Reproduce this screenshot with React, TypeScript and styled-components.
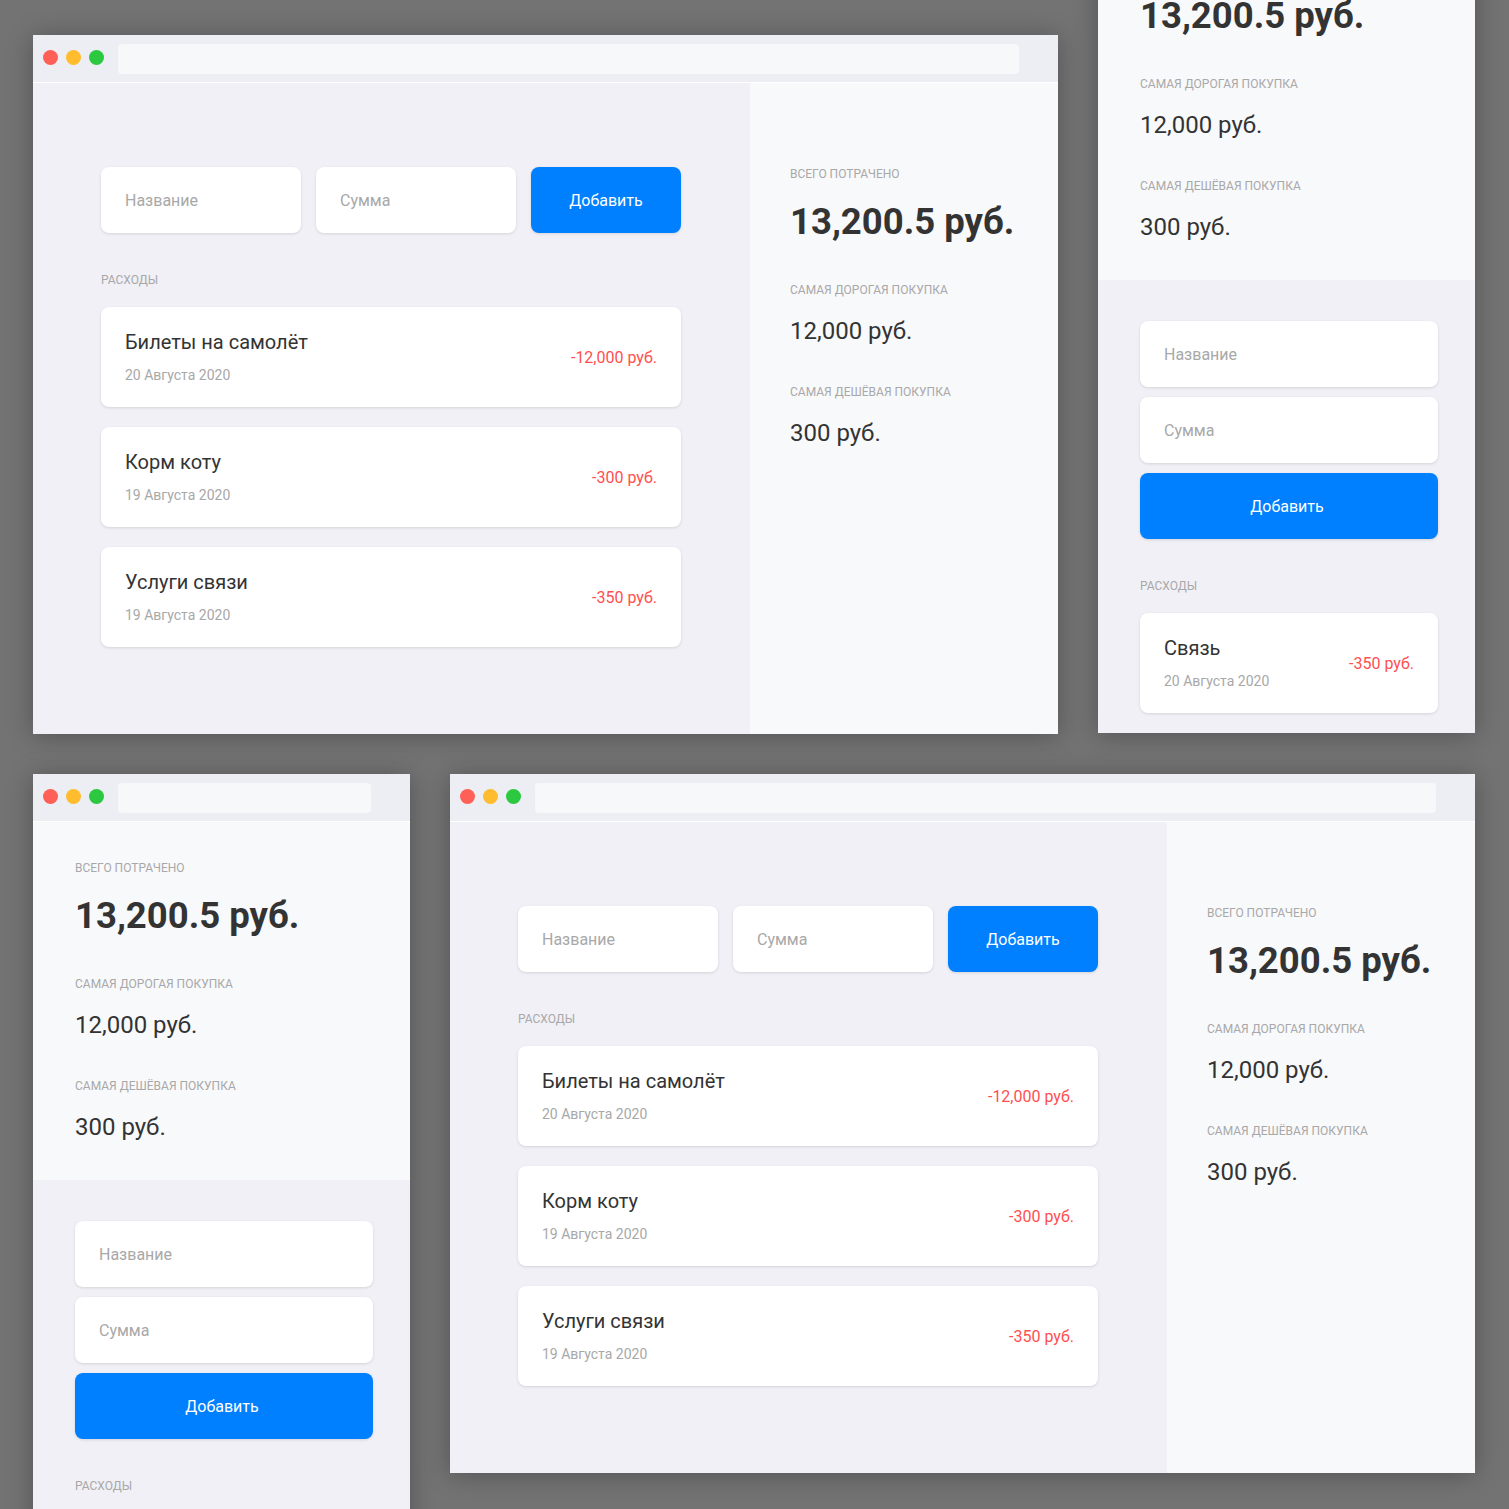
import styled, { createGlobalStyle } from "styled-components";

const GlobalStyle = createGlobalStyle`
  * {
    box-sizing: border-box;
  }
  html,
  body {
    margin: 0;
    padding: 0;
  }
  body {
    font-family: Roboto, "Noto Sans", "Liberation Sans", sans-serif;
    background: #737373;
  }
`;

const Desk = styled.div`
  position: relative;
  width: 1509px;
  height: 1509px;
  overflow: hidden;
  background: #737373;
`;

const Window = styled.div<{ $top: number; $left: number; $width: number; $height: number }>`
  position: absolute;
  top: ${(p) => p.$top}px;
  left: ${(p) => p.$left}px;
  width: ${(p) => p.$width}px;
  height: ${(p) => p.$height}px;
  display: flex;
  flex-direction: column;
  background: #f0f0f6;
  box-shadow: 0 2px 24px rgba(0, 0, 0, 0.28);
  overflow: hidden;
`;

const TitleBar = styled.div`
  display: flex;
  align-items: center;
  flex-shrink: 0;
  height: 48px;
  padding: 9px 39px 8px 10px;
  background: #eceef3;
  border-bottom: 1px solid #ffffff;
`;

const Dots = styled.div`
  display: flex;
  gap: 8px;
  margin: 0 14px 3px 0;
`;

const Dot = styled.span<{ $color: string }>`
  width: 15px;
  height: 15px;
  border-radius: 50%;
  background: ${(p) => p.$color};
`;

const AddressBar = styled.div`
  flex: 1;
  height: 30px;
  border-radius: 4px;
  background: #f7f8fa;
`;

const DesktopBody = styled.div`
  display: flex;
  flex: 1;
`;

const LeftPane = styled.div`
  flex: 1;
  padding: 84px 69px 0 68px;
  background: #f0f0f6;
`;

const RightPane = styled.div`
  width: 308px;
  padding: 84px 40px;
  background: #f8f9fb;
`;

const MobileStats = styled.div`
  padding: 39px 37px 39px 42px;
  background: #f8f9fb;
`;

const MobileMain = styled.div`
  flex: 1;
  padding: 41px 37px 20px 42px;
  background: #f0f0f6;
`;

const Form = styled.div<{ $stacked?: boolean }>`
  display: flex;
  flex-direction: ${(p) => (p.$stacked ? "column" : "row")};
  gap: ${(p) => (p.$stacked ? 10 : 15)}px;
`;

const Field = styled.input<{ $stacked?: boolean }>`
  width: ${(p) => (p.$stacked ? "100%" : "200px")};
  height: 66px;
  padding: 0 24px;
  border: none;
  border-radius: 8px;
  background: #ffffff;
  box-shadow: 0 1px 3px rgba(0, 0, 0, 0.12);
  font-family: Roboto, "Noto Sans", sans-serif;
  font-size: 16px;
  color: #333333;
  outline: none;

  &::placeholder {
    color: #a8a8a8;
  }
`;

const AddButton = styled.button<{ $stacked?: boolean }>`
  width: ${(p) => (p.$stacked ? "100%" : "150px")};
  height: 66px;
  padding: ${(p) => (p.$stacked ? "0 4px 0 0" : "0")};
  border: none;
  border-radius: 8px;
  background: #0080ff;
  box-shadow: 0 1px 3px rgba(0, 0, 0, 0.12);
  color: #ffffff;
  font-family: Roboto, "Noto Sans", sans-serif;
  font-size: 16px;
  cursor: pointer;
`;

const SectionLabel = styled.div`
  margin: 40px 0 20px;
  font-size: 12px;
  line-height: 14px;
  color: #a8a8a8;
  text-transform: uppercase;
`;

const List = styled.div`
  display: flex;
  flex-direction: column;
  gap: 20px;
`;

const Card = styled.div`
  display: flex;
  align-items: center;
  justify-content: space-between;
  height: 100px;
  padding: 0 24px;
  border-radius: 8px;
  background: #ffffff;
  box-shadow: 0 1px 3px rgba(0, 0, 0, 0.12);
`;

const CardTitle = styled.div`
  font-size: 20px;
  line-height: 23px;
  color: #333333;
`;

const CardDate = styled.div`
  margin-top: 13px;
  font-size: 14px;
  line-height: 16px;
  color: #a8a8a8;
`;

const CardAmount = styled.div`
  font-size: 16px;
  color: #ff4f4f;
`;

const Stat = styled.div`
  & + & {
    margin-top: 40px;
  }
`;

const StatLabel = styled.div`
  margin-bottom: 20px;
  font-size: 12px;
  line-height: 14px;
  color: #a8a8a8;
  text-transform: uppercase;
`;

const StatValue = styled.div<{ $big?: boolean }>`
  font-size: ${(p) => (p.$big ? 36.5 : 24)}px;
  line-height: ${(p) => (p.$big ? 42 : 28)}px;
  font-weight: ${(p) => (p.$big ? 700 : 400)};
  color: #333333;
`;

type Expense = { title: string; date: string; amount: string };

const expenses: Expense[] = [
  { title: "Билеты на самолёт", date: "20 Августа 2020", amount: "-12,000 руб." },
  { title: "Корм коту", date: "19 Августа 2020", amount: "-300 руб." },
  { title: "Услуги связи", date: "19 Августа 2020", amount: "-350 руб." },
];

const mobileExpenses: Expense[] = [
  { title: "Связь", date: "20 Августа 2020", amount: "-350 руб." },
];

const Chrome = () => (
  <TitleBar>
    <Dots>
      <Dot $color="#fe5f57" />
      <Dot $color="#febc2e" />
      <Dot $color="#2bc840" />
    </Dots>
    <AddressBar />
  </TitleBar>
);

const Stats = () => (
  <>
    <Stat>
      <StatLabel>Всего потрачено</StatLabel>
      <StatValue $big>13,200.5 руб.</StatValue>
    </Stat>
    <Stat>
      <StatLabel>Самая дорогая покупка</StatLabel>
      <StatValue>12,000 руб.</StatValue>
    </Stat>
    <Stat>
      <StatLabel>Самая дешёвая покупка</StatLabel>
      <StatValue>300 руб.</StatValue>
    </Stat>
  </>
);

const Expenses = ({ items, stacked }: { items: Expense[]; stacked?: boolean }) => (
  <>
    <Form $stacked={stacked}>
      <Field $stacked={stacked} placeholder="Название" />
      <Field $stacked={stacked} placeholder="Сумма" />
      <AddButton $stacked={stacked}>Добавить</AddButton>
    </Form>
    <SectionLabel>Расходы</SectionLabel>
    <List>
      {items.map((item) => (
        <Card key={item.title}>
          <div>
            <CardTitle>{item.title}</CardTitle>
            <CardDate>{item.date}</CardDate>
          </div>
          <CardAmount>{item.amount}</CardAmount>
        </Card>
      ))}
    </List>
  </>
);

const DesktopWindow = ({ top, left }: { top: number; left: number }) => (
  <Window $top={top} $left={left} $width={1025} $height={699}>
    <Chrome />
    <DesktopBody>
      <LeftPane>
        <Expenses items={expenses} />
      </LeftPane>
      <RightPane>
        <Stats />
      </RightPane>
    </DesktopBody>
  </Window>
);

const MobileWindow = ({
  top,
  left,
  height,
  items,
}: {
  top: number;
  left: number;
  height: number;
  items: Expense[];
}) => (
  <Window $top={top} $left={left} $width={377} $height={height}>
    <Chrome />
    <MobileStats>
      <Stats />
    </MobileStats>
    <MobileMain>
      <Expenses items={items} stacked />
    </MobileMain>
  </Window>
);

export default function App() {
  return (
    <>
      <GlobalStyle />
      <Desk>
        <DesktopWindow top={35} left={33} />
        <MobileWindow top={-126} left={1098} height={859} items={mobileExpenses} />
        <MobileWindow top={774} left={33} height={1100} items={mobileExpenses} />
        <DesktopWindow top={774} left={450} />
      </Desk>
    </>
  );
}
